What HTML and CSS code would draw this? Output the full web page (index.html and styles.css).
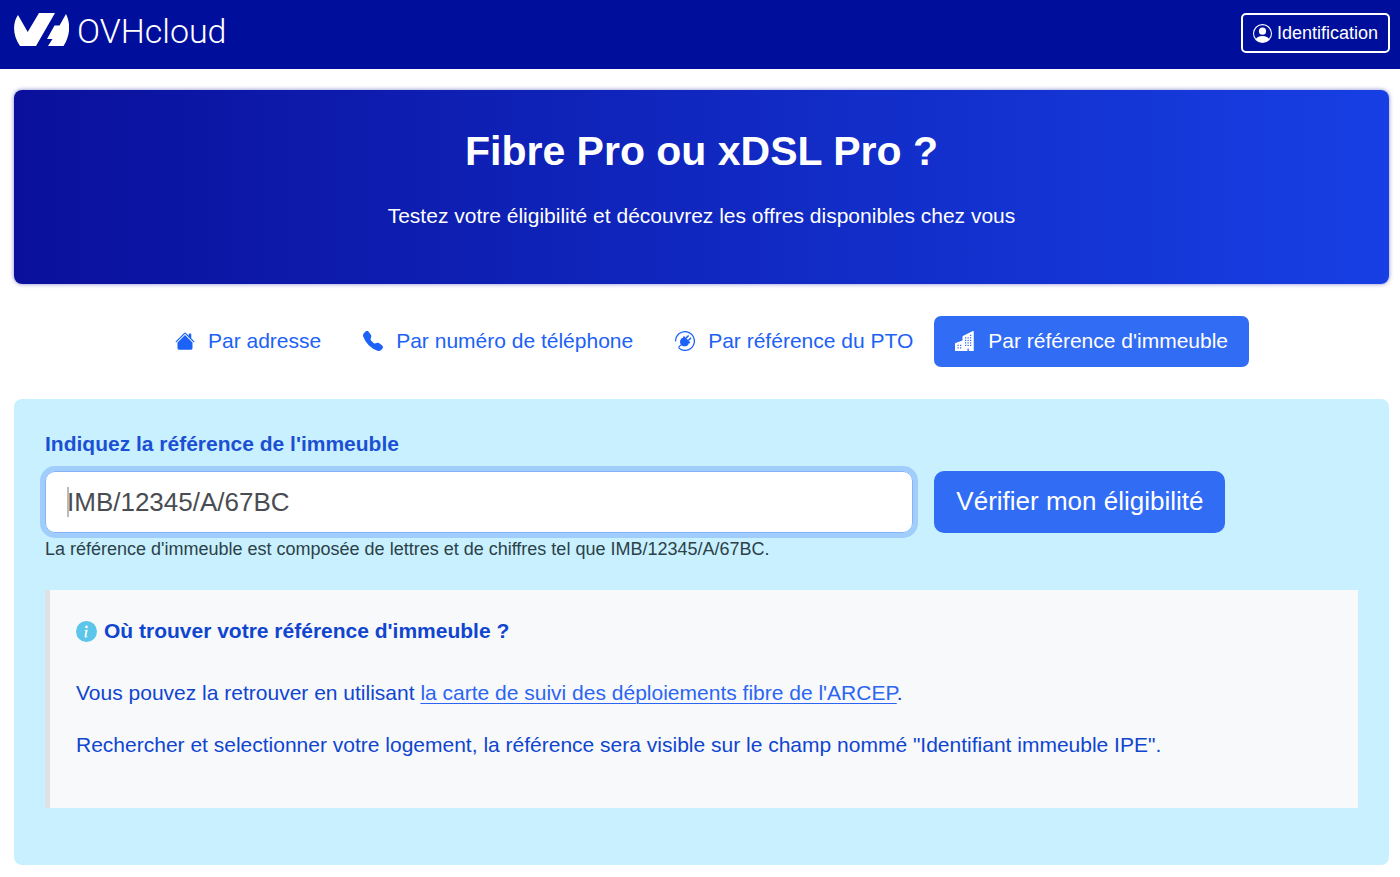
FILE: index.html
```
<!DOCTYPE html>
<html lang="fr">

<head>
    <meta charset="UTF-8">
    <meta name="viewport" content="width=device-width, initial-scale=1.0">
    <title>Fibre Pro ou xDSL Pro ?</title>
    <link rel="stylesheet" href="styles.css">
</head>

<body>

    <header class="navbar">
        <a class="brand" href="#">
            <svg class="brand-mark" viewBox="0 0 55 33" aria-hidden="true">
                <path d="M4 2 L13.7 19 L25 0 H41 L22 33 H6 C-1 23 -2 11 4 2Z" />
                <path d="M52 1 C57 11 56 23 49.500 33 H34 L38.500 26 H33 L40.500 12.500 H45.500Z" />
            </svg>
            <span class="brand-name">OVHcloud</span>
        </a>
        <button class="btn-login" type="button">
            <svg class="icon-user" viewBox="0 0 16 16" aria-hidden="true">
                <path d="M11 6a3 3 0 1 1-6 0 3 3 0 0 1 6 0" />
                <path fill-rule="evenodd" d="M0 8a8 8 0 1 1 16 0A8 8 0 0 1 0 8m8-7a7 7 0 0 0-5.468 11.37C3.242 11.226 4.805 10 8 10s4.757 1.225 5.468 2.37A7 7 0 0 0 8 1" />
            </svg>
            Identification
        </button>
    </header>

    <main>
        <section class="hero">
            <h1>Fibre Pro ou xDSL Pro ?</h1>
            <p>Testez votre éligibilité et découvrez les offres disponibles chez vous</p>
        </section>

        <nav class="tabs">
            <a class="tab" href="#">
                <svg class="icon" viewBox="0 0 16 16" aria-hidden="true">
                    <path d="M8.707 1.5a1 1 0 0 0-1.414 0L.646 8.146a.5.5 0 0 0 .708.708L8 2.207l6.646 6.647a.5.5 0 0 0 .708-.708L13 5.793V2.5a.5.5 0 0 0-.5-.5h-1a.5.5 0 0 0-.5.5v1.293z" />
                    <path d="m8 3.293 6 6V13.5a1.5 1.5 0 0 1-1.5 1.5h-9A1.5 1.5 0 0 1 2 13.5V9.293z" />
                </svg>
                Par adresse
            </a>
            <a class="tab" href="#">
                <svg class="icon" viewBox="0 0 16 16" aria-hidden="true">
                    <path d="M1.885.511a1.745 1.745 0 0 1 2.61.163L6.29 2.98c.329.423.445.974.315 1.494l-.547 2.19a.68.68 0 0 0 .178.643l2.457 2.457a.68.68 0 0 0 .644.178l2.189-.547a1.75 1.75 0 0 1 1.494.315l2.306 1.794c.829.645.905 1.87.163 2.611l-1.034 1.034c-.74.74-1.846 1.065-2.877.702a18.6 18.6 0 0 1-7.01-4.42 18.6 18.6 0 0 1-4.42-7.009c-.362-1.03-.037-2.137.703-2.877z" />
                </svg>
                Par numéro de téléphone
            </a>
            <a class="tab" href="#">
                <svg class="icon" viewBox="0 0 16 16" aria-hidden="true">
                    <g fill="none" stroke="currentColor" stroke-width="1">
                        <path d="M.5 8.300A7.500 7.500 0 1 1 3.100 13.700" />
                        <path d="M3.100 13.700C2.500 12.500 3.800 12 5.400 10.700" />
                        <path stroke-width="1.200" d="M8.800 5.700 10.900 3.600M10.700 7.600 12.800 5.500" />
                    </g>
                    <path d="M7.200 4 12.300 9.100 11.500 10 11 9.700 C11 12 7.300 13.300 5.100 11.300 C3 9 4.300 5.600 6.600 5.400 L6.300 5Z" />
                </svg>
                Par référence du PTO
            </a>
            <a class="tab active" href="#" aria-current="page">
                <svg class="icon" viewBox="0 0 16 16" aria-hidden="true">
                    <path fill-rule="evenodd" d="M15 .5a.5.5 0 0 0-.724-.447l-8 4A.5.5 0 0 0 6 4.5v3.14L.342 9.526A.5.5 0 0 0 0 10v5.5a.5.5 0 0 0 .5.5h9a.5.5 0 0 0 .5-.5V14h1v1.5a.5.5 0 0 0 .5.5h3a.5.5 0 0 0 .5-.5zM2 11h1v1H2zm2 0h1v1H4zm-1 2v1H2v-1zm1 0h1v1H4zm9-10v1h-1V3zM8 5h1v1H8zm1 2v1H8V7zM8 9h1v1H8zm2 0h1v1h-1zm-1 2v1H8v-1zm1 0h1v1h-1zm3-2v1h-1V9zm-1 2h1v1h-1zm-2-4h1v1h-1zm3 0v1h-1V7zm-2-2v1h-1V5zm1 0h1v1h-1z" />
                </svg>
                Par référence d'immeuble
            </a>
        </nav>

        <section class="panel">
            <form class="search-form">
                <label for="reference">Indiquez la référence de l'immeuble</label>
                <input type="text" id="reference" name="reference" placeholder="IMB/12345/A/67BC">
                <button class="btn-submit" type="button">Vérifier mon éligibilité</button>
                <p class="help">La référence d'immeuble est composée de lettres et de chiffres tel que IMB/12345/A/67BC.</p>
            </form>

            <div class="info">
                <h2>
                    <svg class="icon-info" viewBox="0 0 16 16" aria-hidden="true">
                        <circle cx="8" cy="8" r="8" />
                        <path class="icon-info-letter" d="m8.930 6.588-2.290.287-.082.380.450.083c.294.070.352.176.288.469l-.738 3.468c-.194.897.105 1.319.808 1.319.545 0 1.178-.252 1.465-.598l.088-.416c-.2.176-.492.246-.686.246-.275 0-.375-.193-.304-.533zM9 4.500a1 1 0 1 1-2 0 1 1 0 0 1 2 0" />
                    </svg>
                    Où trouver votre référence d'immeuble ?
                </h2>
                <p>Vous pouvez la retrouver en utilisant <a href="#">la carte de suivi des déploiements fibre de l'ARCEP</a>.</p>
                <p>Rechercher et selectionner votre logement, la référence sera visible sur le champ nommé "Identifiant immeuble IPE".</p>
            </div>
        </section>
    </main>

</body>

</html>
```
FILE: styles.css
```
* {
    box-sizing: border-box;
}

body {
    margin: 0;
    background-color: #fff;
    color: #0f45cf;
    font-family: "Liberation Sans", Arial, sans-serif;
    font-size: 21px;
    line-height: 32px;
}

h1, h2, p {
    margin: 0;
}

button, input {
    font-family: inherit;
}

svg {
    fill: currentColor;
    flex-shrink: 0;
}

/* top bar */
.navbar {
    display: flex;
    justify-content: space-between;
    align-items: flex-start;
    height: 69px;
    padding: 13px 10px 0 14px;
    background-color: #000e9c;
}

.brand {
    display: flex;
    align-items: flex-start;
    gap: 8px;
    color: #fff;
    text-decoration: none;
}

.brand-mark {
    width: 55px;
    height: 33px;
}

.brand-name {
    font-family: Roboto, sans-serif;
    font-size: 34px;
    font-weight: 300;
    line-height: 36px;
}

.btn-login {
    display: flex;
    align-items: center;
    gap: 5px;
    height: 40px;
    padding: 0 10px;
    border: 2px solid #fff;
    border-radius: 5px;
    background: none;
    color: #fff;
    font-size: 18px;
}

.icon-user {
    width: 19px;
    height: 19px;
}

main {
    padding: 21px 11px 12px 14px;
}

/* title banner */
.hero {
    height: 194px;
    padding: 35px 20px;
    border-radius: 8px;
    background: linear-gradient(to right, #0a109b, #173fe4);
    box-shadow: 0 0 4px rgba(0, 14, 156, 0.5);
    color: #fff;
    text-align: center;
}

.hero h1 {
    margin-bottom: 23px;
    font-size: 41px;
    line-height: 52px;
}

.tabs {
    display: flex;
    justify-content: center;
    margin: 32px 0;
}

.tab {
    display: flex;
    align-items: center;
    gap: 13px;
    height: 51px;
    padding: 0 21px 2px;
    border-radius: 7px;
    color: #1c62f6;
    text-decoration: none;
}

.tab.active {
    background-color: #316cf4;
    color: #fff;
}

.icon {
    width: 20px;
    height: 20px;
}

/* search panel */
.panel {
    padding: 29px 31px 57px;
    border-radius: 8px;
    background-color: #c8f0ff;
}

.search-form {
    display: grid;
    grid-template-columns: repeat(12, 1fr);
    column-gap: 21px;
}

label {
    grid-column: span 12;
    margin-bottom: 11px;
    color: #1c50d3;
    font-weight: bold;
}

input {
    grid-column: span 8;
    height: 62px;
    padding: 0 21px;
    border: 1px solid #86b2fb;
    border-radius: 10px;
    outline: 5px solid #a1cdfc;
    /* text cursor */
    background: linear-gradient(#bbb, #bbb) 21px center / 2px 30px no-repeat #fff;
    font-size: 26px;
}

input::placeholder {
    color: #494d52;
    opacity: 1;
}

.btn-submit {
    grid-column: span 4;
    justify-self: start;
    padding: 0 22px 2px;
    border: none;
    border-radius: 10px;
    background-color: #316cf4;
    color: #fff;
    font-size: 26px;
}

.help {
    grid-column: span 12;
    margin-top: 2px;
    color: #2c4148;
    font-size: 18px;
    line-height: 28px;
}

.info {
    height: 218px;
    margin-top: 27px;
    padding: 25px 26px;
    border-left: 5px solid #dee2e6;
    background-color: #f8f9fb;
}

.info h2 {
    display: flex;
    align-items: center;
    gap: 7px;
    margin-bottom: 30px;
    font-size: 21px;
    line-height: 32px;
}

.info p {
    margin-bottom: 20px;
}

.info a {
    color: #2b65f2;
    text-decoration-thickness: 1px;
    text-underline-offset: 3px;
}

.icon-info {
    width: 21px;
    height: 21px;
    color: #5bc5ea;
}

.icon-info-letter {
    fill: #fff;
}
```
